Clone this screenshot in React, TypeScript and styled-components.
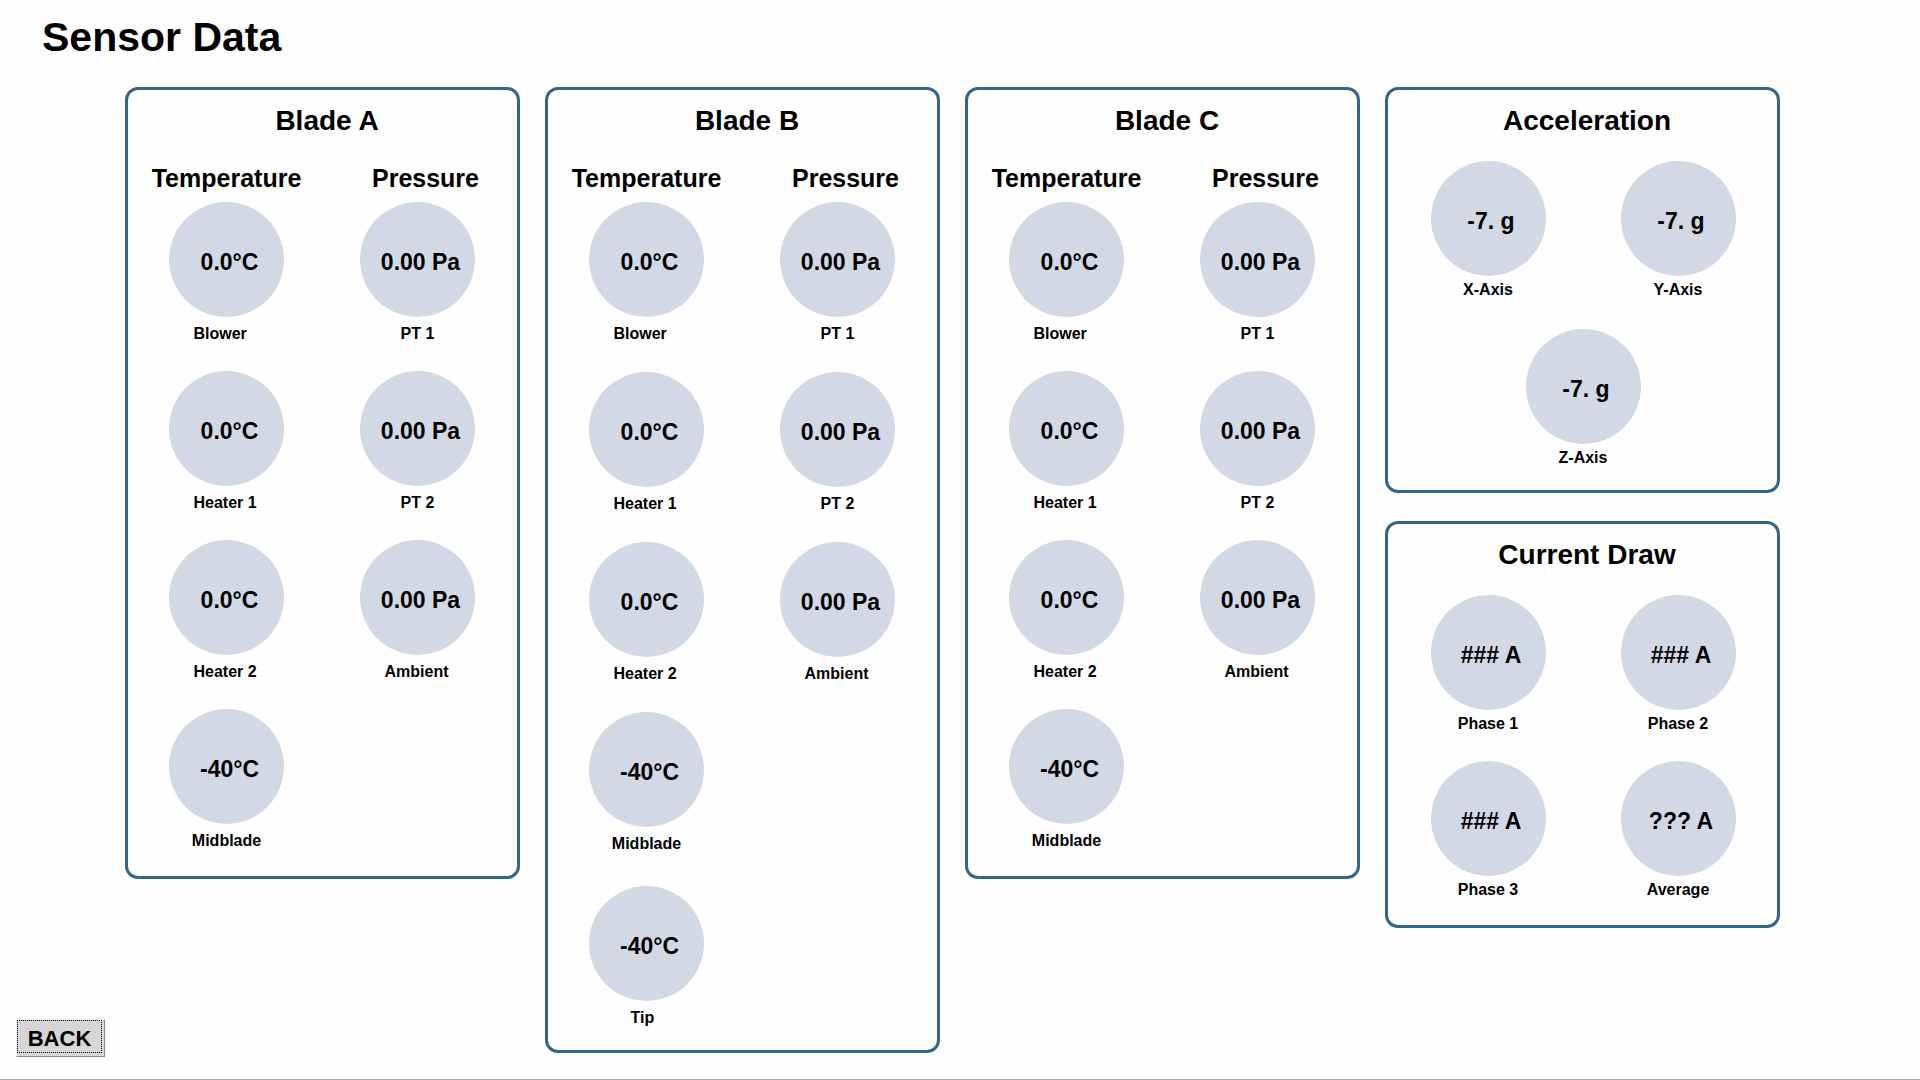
import React from "react";
import styled, { createGlobalStyle } from "styled-components";

const GlobalStyle = createGlobalStyle`
  *, *::before, *::after { box-sizing: border-box; }
  body {
    margin: 0;
    background: #fefefe;
    color: #000;
    font-family: "Liberation Sans", Arial, Helvetica, sans-serif;
    font-weight: 700;
  }
  h1, h2, h3, dl, dt, dd { margin: 0; font-weight: 700; }
`;

const Page = styled.div`
  display: flex;
  flex-direction: column;
  min-height: 100vh;
  border-bottom: 1px solid #a8a8a8;
`;

const Header = styled.header`
  padding: 14px 42px 26px;
`;

const PageTitle = styled.h1`
  font-size: 41px;
  line-height: 47px;
`;

const Body = styled.div`
  flex: 1;
  display: grid;
  grid-template-columns: 125px minmax(0, 1fr);
`;

const Side = styled.nav`
  display: flex;
  align-items: flex-end;
  padding: 0 0 22px 16px;
`;

const BackButton = styled.button`
  display: flex;
  width: 89px;
  height: 38px;
  padding: 0 2px 3px 0;
  border: 1px solid;
  border-color: #ececec #858585 #858585 #ececec;
  background: #d6d6d6;
  color: #000;
  font-family: inherit;
  font-size: 22px;
  font-weight: 700;
  line-height: 26px;
`;

const ButtonFace = styled.span`
  flex: 1;
  align-self: stretch;
  padding-top: 5px;
  border: 1px dotted #000;
`;

const Panels = styled.main`
  display: grid;
  grid-template-columns: repeat(4, minmax(0, 1fr));
  align-items: start;
  gap: 25px;
  padding: 0 140px 20px 0;
`;

const Stack = styled.div`
  display: grid;
  gap: 28px;
`;

const Panel = styled.section<{ $foot: number }>`
  padding: 15px 4px ${(p) => p.$foot}px 3px;
  border: 3px solid #34668b;
  border-radius: 13px;
`;

const PanelTitle = styled.h2`
  padding-left: 10px;
  font-size: 28px;
  line-height: 32px;
  text-align: center;
`;

const Columns = styled.div`
  display: grid;
  grid-template-columns: 1fr 1fr;
  align-items: start;
  padding-top: 27px;
`;

const Column = styled.div<{ $gap: number }>`
  display: grid;
  justify-items: center;
  row-gap: ${(p) => p.$gap}px;
`;

const ColumnTitle = styled.h3<{ $inset: number }>`
  padding: 0 0 10px ${(p) => p.$inset}px;
  font-size: 25px;
  line-height: 28px;
  text-align: center;
`;

const Cluster = styled.div<{ $gap: number }>`
  display: grid;
  grid-template-columns: 1fr 1fr;
  justify-items: center;
  row-gap: ${(p) => p.$gap}px;
  padding: 24px 0 0 2px;
`;

const GaugeBox = styled.dl<{ $span?: boolean; $tight?: boolean; $apart?: boolean }>`
  display: flex;
  flex-direction: column-reverse;
  align-items: center;
  gap: ${(p) => (p.$tight ? 4 : 7)}px;
  grid-column: ${(p) => (p.$span ? "1 / -1" : "auto")};
  padding-top: ${(p) => (p.$apart ? 4 : 0)}px;
`;

const Dial = styled.dd`
  display: flex;
  align-items: center;
  justify-content: center;
  width: 115px;
  height: 115px;
  padding: 4px 0 0 6px;
  border-radius: 50%;
  background: #d2d9e5;
  font-size: 23px;
  line-height: 28px;
  white-space: nowrap;
`;

const Name = styled.dt<{ $short: boolean }>`
  min-width: ${(p) => (p.$short ? 32 : 66)}px;
  font-size: 16px;
  line-height: 20px;
  white-space: nowrap;
`;

type Reading = { name: string; value: string; short?: boolean; span?: boolean; apart?: boolean };

const temperatures: Reading[] = [
  { name: "Blower", value: "0.0°C" },
  { name: "Heater 1", value: "0.0°C" },
  { name: "Heater 2", value: "0.0°C" },
  { name: "Midblade", value: "-40°C" },
];

const tip: Reading = { name: "Tip", value: "-40°C", short: true, apart: true };

const pressures: Reading[] = [
  { name: "PT 1", value: "0.00 Pa", short: true },
  { name: "PT 2", value: "0.00 Pa", short: true },
  { name: "Ambient", value: "0.00 Pa" },
];

const axes: Reading[] = [
  { name: "X-Axis", value: "-7. g", short: true },
  { name: "Y-Axis", value: "-7. g", short: true },
  { name: "Z-Axis", value: "-7. g", short: true, span: true },
];

const phases: Reading[] = [
  { name: "Phase 1", value: "### A", short: true },
  { name: "Phase 2", value: "### A", short: true },
  { name: "Phase 3", value: "### A", short: true },
  { name: "Average", value: "??? A", short: true },
];

function Gauge({ reading, tight }: { reading: Reading; tight?: boolean }) {
  return (
    <GaugeBox $tight={tight} $span={reading.span} $apart={reading.apart}>
      <Name $short={!!reading.short}>{reading.name}</Name>
      <Dial>{reading.value}</Dial>
    </GaugeBox>
  );
}

function ReadingColumn({ title, readings, gap, inset = 0 }: { title: string; readings: Reading[]; gap: number; inset?: number }) {
  return (
    <div>
      <ColumnTitle $inset={inset}>{title}</ColumnTitle>
      <Column $gap={gap}>
        {readings.map((r) => (
          <Gauge key={r.name} reading={r} />
        ))}
      </Column>
    </div>
  );
}

function BladePanel({ title, temps, gap, foot }: { title: string; temps: Reading[]; gap: number; foot: number }) {
  return (
    <Panel $foot={foot}>
      <PanelTitle>{title}</PanelTitle>
      <Columns>
        <ReadingColumn title="Temperature" readings={temps} gap={gap} />
        <ReadingColumn title="Pressure" readings={pressures} gap={gap} inset={16} />
      </Columns>
    </Panel>
  );
}

function ClusterPanel({ title, readings, gap, foot }: { title: string; readings: Reading[]; gap: number; foot: number }) {
  return (
    <Panel $foot={foot}>
      <PanelTitle>{title}</PanelTitle>
      <Cluster $gap={gap}>
        {readings.map((r) => (
          <Gauge key={r.name} reading={r} tight />
        ))}
      </Cluster>
    </Panel>
  );
}

export default function App() {
  return (
    <Page>
      <GlobalStyle />
      <Header>
        <PageTitle>Sensor Data</PageTitle>
      </Header>
      <Body>
        <Side>
          <BackButton type="button">
            <ButtonFace>BACK</ButtonFace>
          </BackButton>
        </Side>
        <Panels>
          <BladePanel title="Blade A" temps={temperatures} gap={27} foot={25} />
          <BladePanel title="Blade B" temps={[...temperatures, tip]} gap={28} foot={22} />
          <BladePanel title="Blade C" temps={temperatures} gap={27} foot={25} />
          <Stack>
            <ClusterPanel title="Acceleration" readings={axes} gap={29} foot={22} />
            <ClusterPanel title="Current Draw" readings={phases} gap={27} foot={25} />
          </Stack>
        </Panels>
      </Body>
    </Page>
  );
}
